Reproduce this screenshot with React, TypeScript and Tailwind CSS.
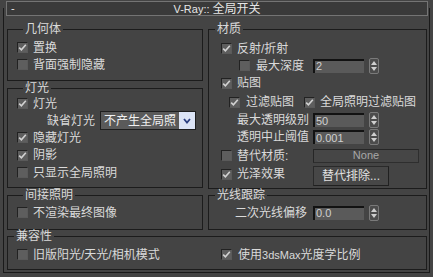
import React from "react";

const Check = ({ checked }: { checked?: boolean }) => (
  <span className="flex h-[11px] w-[11px] shrink-0 items-center justify-center border border-t-[#222] border-l-[#222] border-b-[#5a5a5a] border-r-[#5a5a5a] bg-[#5e5e5e]">
    {checked && (
      <svg width="9" height="9" viewBox="0 0 9 9">
        <path d="M1.2 4.6 L3.4 6.8 L7.8 1.8" fill="none" stroke="#d2d2d2" strokeWidth="1.6" />
      </svg>
    )}
  </span>
);

const CheckRow = ({ checked, label, cls = "" }: { checked?: boolean; label: string; cls?: string }) => (
  <div className={`flex items-center ${cls}`}>
    <Check checked={checked} />
    <span className="ml-[5px] whitespace-nowrap">{label}</span>
  </div>
);

const Spinner = () => (
  <div className="flex h-[16px] w-[10px] flex-col items-center justify-center gap-[2px] rounded-[2px] border border-[#7a7a7a] bg-[#4c4c4c]">
    <svg width="6" height="4" viewBox="0 0 6 4">
      <path d="M0 4 L3 0 L6 4 Z" fill="#cfcfcf" />
    </svg>
    <svg width="6" height="4" viewBox="0 0 6 4">
      <path d="M0 0 L3 4 L6 0 Z" fill="#cfcfcf" />
    </svg>
  </div>
);

const Num = ({ value }: { value: string }) => (
  <div className="flex items-center gap-[5px]">
    <div className="flex h-[14px] w-[51px] items-center border-t-2 border-l-2 border-t-[#121212] border-l-[#121212] bg-[#5a5a5a] pl-[1px] text-[11px] leading-none text-[#d0d0d0]">
      {value}
    </div>
    <Spinner />
  </div>
);

const Group = ({
  title,
  cls,
  children,
}: {
  title: string;
  cls: string;
  children?: React.ReactNode;
}) => (
  <fieldset className={`border border-[#1c1c1c] ${cls}`}>
    <legend className="ml-[6px] h-[13px] px-[2px] leading-[13px]">{title}</legend>
    {children}
  </fieldset>
);

export default function App() {
  return (
    <div className="h-[277px] w-[433px] bg-[#444444] pl-[3px] pt-[8px] font-['Liberation_Sans','Noto_Sans_CJK_SC',sans-serif] text-[12px] leading-none text-[#dadada]">
      <div className="flex h-[265px] w-[427px] flex-col border-x border-b border-[#1a1a1a]">
        {/* title bar */}
        <div className="-mt-[7px] ml-[2px] mr-[1px] grid h-[15px] grid-cols-[20px_1fr_20px] items-center border border-[#747474] bg-[#3a3a3a] text-[#e6e6e6]">
          <span className="pl-[4px] text-[11px]">-</span>
          <span className="text-center text-[12px]">
            <span className="text-[11px]">V-Ray:: </span>全局开关
          </span>
          <span />
        </div>

        <div className="mt-[7px] flex gap-[5px] pl-[3px]">
          {/* left column */}
          <div className="flex w-[196px] flex-col">
            <Group title="几何体" cls="h-[58px] pl-[9px] pt-[3px]">
              <CheckRow checked label="置换" cls="h-[17px]" />
              <CheckRow label="背面强制隐藏" cls="h-[17px]" />
            </Group>
            <Group title="灯光" cls="mt-[1px] h-[106px] pl-[9px]">
              <CheckRow checked label="灯光" cls="h-[17px]" />
              <div className="flex h-[17px] items-center pl-[30px]">
                <span className="w-[53px] whitespace-nowrap">缺省灯光</span>
                <div className="flex h-[19px] w-[96px] items-center border border-[#1e1e1e] bg-[#5a5a5a]">
                  <span className="flex-1 whitespace-nowrap pl-[3px] text-[#f0f0f0]">不产生全局照</span>
                  <span className="flex h-full w-[16px] shrink-0 items-center justify-center bg-[#dce4f6]">
                    <svg width="8" height="6" viewBox="0 0 8 6">
                      <path d="M1 1 L4 4.5 L7 1" fill="none" stroke="#2c3f80" strokeWidth="1.8" />
                    </svg>
                  </span>
                </div>
              </div>
              <CheckRow checked label="隐藏灯光" cls="h-[17px]" />
              <CheckRow checked label="阴影" cls="h-[18px]" />
              <CheckRow label="只显示全局照明" cls="h-[17px]" />
            </Group>
            <Group title="间接照明" cls="mt-[1px] h-[41px] pl-[9px] pt-[2px]">
              <CheckRow label="不渲染最终图像" cls="h-[17px]" />
            </Group>
          </div>

          {/* right column */}
          <div className="flex w-[219px] flex-col">
            <Group title="材质" cls="h-[166px] pt-[4px]">
              <CheckRow checked label="反射/折射" cls="h-[17px] pl-[12px]" />
              <div className="flex h-[17px] items-center">
                <div className="flex w-[104px] items-center pl-[30px]">
                  <Check />
                  <span className="ml-[6px] whitespace-nowrap">最大深度</span>
                </div>
                <Num value="2" />
              </div>
              <CheckRow checked label="贴图" cls="h-[18px] pl-[12px]" />
              <div className="flex h-[20px] items-center">
                <div className="flex w-[95px] items-center pl-[20px]">
                  <Check checked />
                  <span className="ml-[6px] whitespace-nowrap">过滤贴图</span>
                </div>
                <CheckRow checked label="全局照明过滤贴图" />
              </div>
              <div className="flex h-[16px] items-center">
                <span className="w-[104px] whitespace-nowrap pl-[28px]">最大透明级别</span>
                <Num value="50" />
              </div>
              <div className="flex h-[18px] items-center">
                <span className="w-[104px] whitespace-nowrap pl-[28px]">透明中止阈值</span>
                <Num value="0.001" />
              </div>
              <div className="flex h-[19px] items-center">
                <div className="flex w-[104px] items-center pl-[12px]">
                  <Check />
                  <span className="ml-[5px] whitespace-nowrap">替代材质:</span>
                </div>
                <div className="flex h-[14px] w-[106px] items-center justify-center border border-t-[#262626] border-l-[#262626] border-b-[#2e2e2e] border-r-[#2e2e2e] bg-[#464646] text-[11px] text-[#a8a8a8]">
                  None
                </div>
              </div>
              <div className="flex h-[22px] items-start">
                <div className="mt-[3px] flex w-[104px] items-center pl-[12px]">
                  <Check checked />
                  <span className="ml-[5px] whitespace-nowrap">光泽效果</span>
                </div>
                <div className="mt-[1px] flex h-[20px] w-[76px] items-center justify-center border border-t-[#2a2a2a] border-l-[#2a2a2a] border-b-[#202020] border-r-[#202020] bg-[#474747] text-[#e2e2e2]">
                  替代排除...
                </div>
              </div>
            </Group>
            <Group title="光线跟踪" cls="h-[41px] pt-[2px]">
              <div className="flex h-[17px] items-center">
                <span className="w-[104px] whitespace-nowrap pl-[26px]">二次光线偏移</span>
                <Num value="0.0" />
              </div>
            </Group>
          </div>
        </div>

        <Group title="兼容性" cls="ml-[3px] h-[40px] w-[420px] pt-[3px]">
          <div className="flex h-[17px] items-center">
            <div className="w-[213px] pl-[9px]">
              <CheckRow label="旧版阳光/天光/相机模式" />
            </div>
            <div className="flex items-center">
              <Check checked />
              <span className="ml-[6px] whitespace-nowrap">
                使用<span className="text-[11px]">3dsMax</span>光度学比例
              </span>
            </div>
          </div>
        </Group>
      </div>
    </div>
  );
}
